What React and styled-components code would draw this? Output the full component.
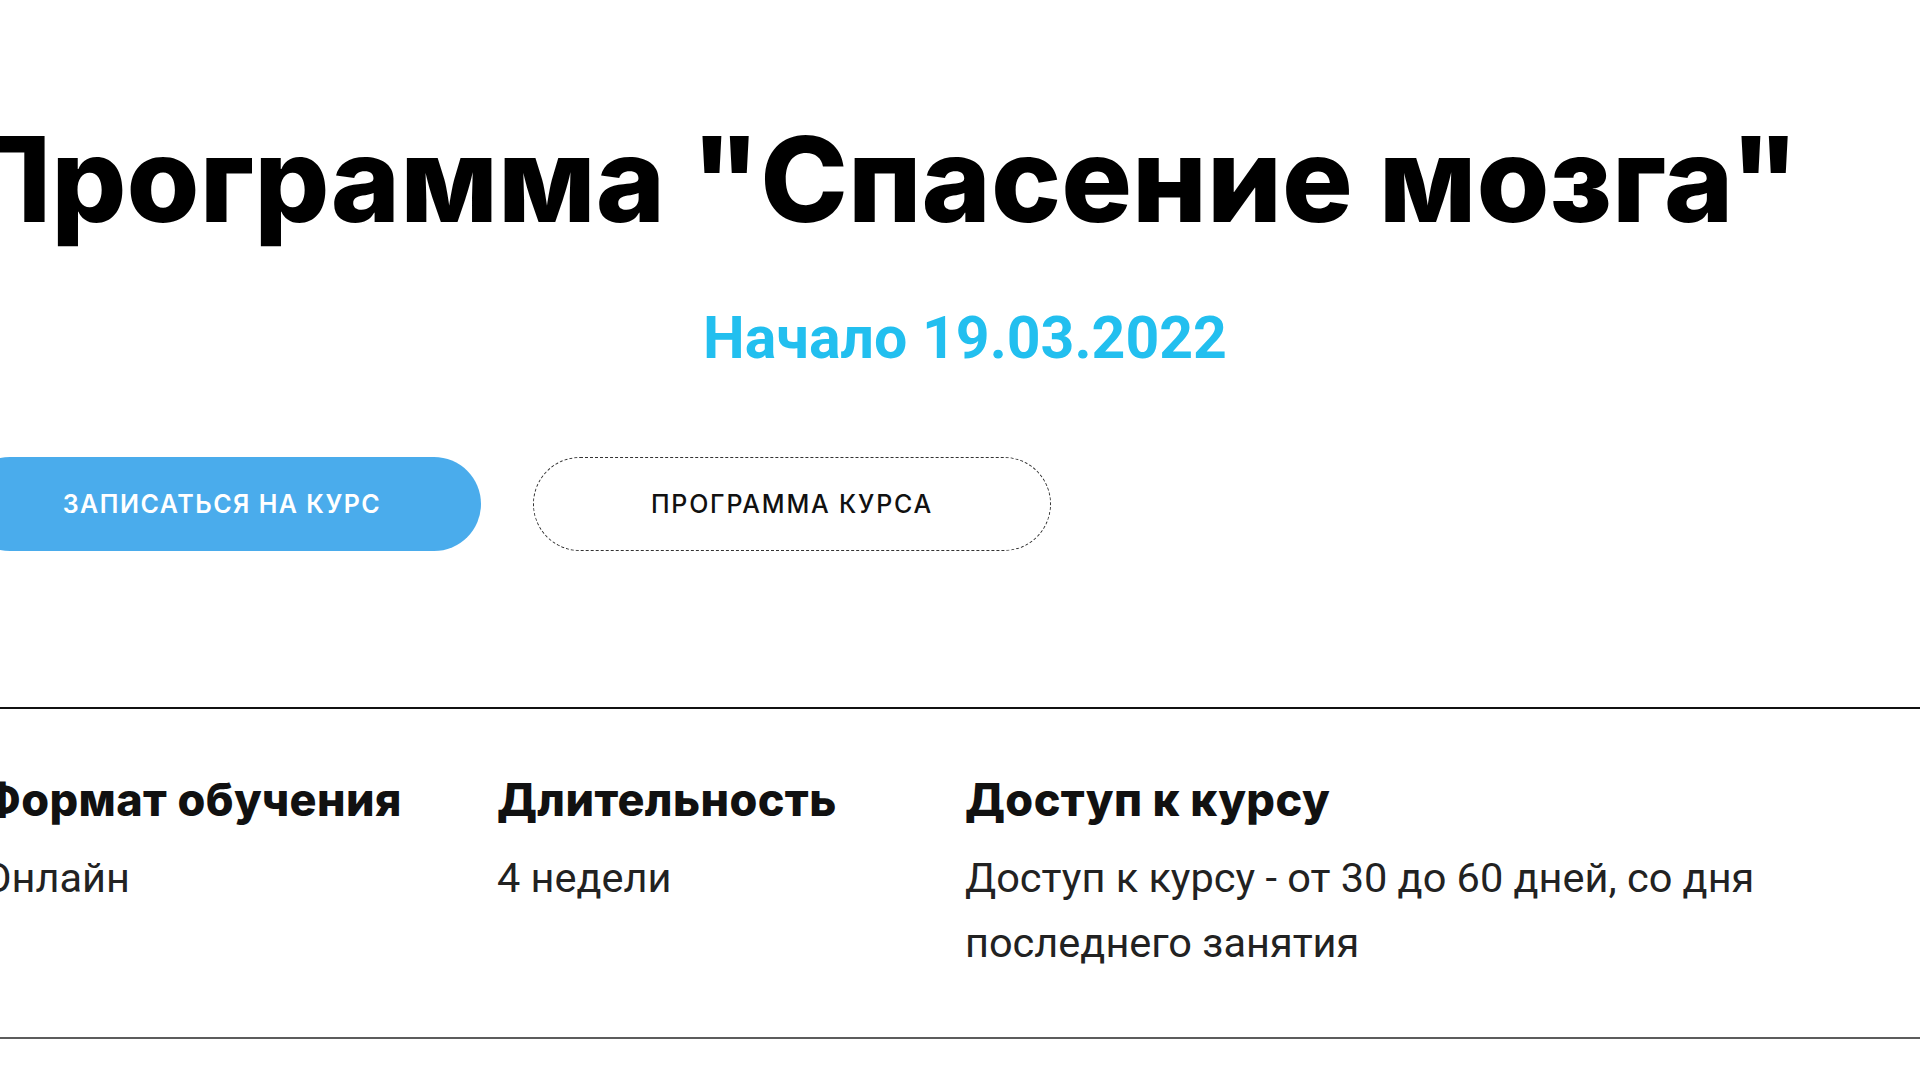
import styled, { createGlobalStyle } from "styled-components";

const GlobalStyle = createGlobalStyle`
    html, body {
        margin: 0;
        padding: 0;
        background: #fff;
    }
    body {
        overflow-x: hidden;
    }
`;

const Page = styled.div`
    width: 100vw;
    overflow: hidden;
`;

const Container = styled.div`
    margin-left: -37px;
    width: calc(100% + 74px);
`;

const Hero = styled.section`
    display: flex;
    flex-direction: column;
    padding-top: 120px;
`;

const Title = styled.h1`
    margin: 0;
    font-family: "Inter", "Liberation Sans", sans-serif;
    font-weight: 800;
    font-size: 118px;
    line-height: 1;
    letter-spacing: 0;
    color: #000;
    white-space: nowrap;
`;

const StartDate = styled.div`
    margin-top: 70px;
    padding-left: 10px;
    font-family: "Roboto", "Liberation Sans", sans-serif;
    font-weight: 700;
    font-size: 59px;
    line-height: 1;
    color: #22bfef;
    text-align: center;
`;

const Actions = styled.div`
    display: flex;
    gap: 52px;
    margin-top: 90px;
`;

const Button = styled.button`
    width: 518px;
    height: 94px;
    border-radius: 47px;
    display: flex;
    align-items: center;
    justify-content: center;
    font-family: "Inter", "Liberation Sans", sans-serif;
    font-weight: ${({ $primary }) => ($primary ? 600 : 500)};
    font-size: 25px;
    letter-spacing: ${({ $primary }) => ($primary ? "1.5px" : "1.8px")};
    text-transform: uppercase;
    cursor: pointer;
    background: ${({ $primary }) => ($primary ? "#4aacec" : "#fff")};
    color: ${({ $primary }) => ($primary ? "#fff" : "#111")};
    border: ${({ $primary }) => ($primary ? "none" : "1px dashed #333")};
`;

const Info = styled.section`
    margin-top: 156px;
    border-top: 2px solid #111;
    border-bottom: 2px solid #5c5c5c;
    padding: 68px 0 62px 20px;
    display: grid;
    grid-template-columns: 514px 468px 830px;
`;

const InfoItem = styled.div`
    display: flex;
    flex-direction: column;
    gap: 23px;
`;

const InfoLabel = styled.h3`
    margin: 0;
    font-family: "Inter", "Liberation Sans", sans-serif;
    font-weight: 800;
    font-size: 45px;
    line-height: 1;
    letter-spacing: 0.4px;
    color: #111;
`;

const InfoValue = styled.p`
    margin: 0;
    font-family: "Roboto", "Liberation Sans", sans-serif;
    font-weight: 400;
    font-size: 41.5px;
    line-height: 65px;
    color: #222;
`;

const info = [
    { label: "Формат обучения", value: "Онлайн" },
    { label: "Длительность", value: "4 недели" },
    { label: "Доступ к курсу", value: "Доступ к курсу - от 30 до 60 дней, со дня последнего занятия" },
];

const App = () => {
    return (
        <Page>
            <GlobalStyle />
            <Container>
                <Hero>
                    <Title>Программа "Спасение мозга"</Title>
                    <StartDate>Начало 19.03.2022</StartDate>
                    <Actions>
                        <Button $primary>Записаться на курс</Button>
                        <Button>Программа курса</Button>
                    </Actions>
                </Hero>
                <Info>
                    {info.map((item) => (
                        <InfoItem key={item.label}>
                            <InfoLabel>{item.label}</InfoLabel>
                            <InfoValue>{item.value}</InfoValue>
                        </InfoItem>
                    ))}
                </Info>
            </Container>
        </Page>
    );
};

export default App;
